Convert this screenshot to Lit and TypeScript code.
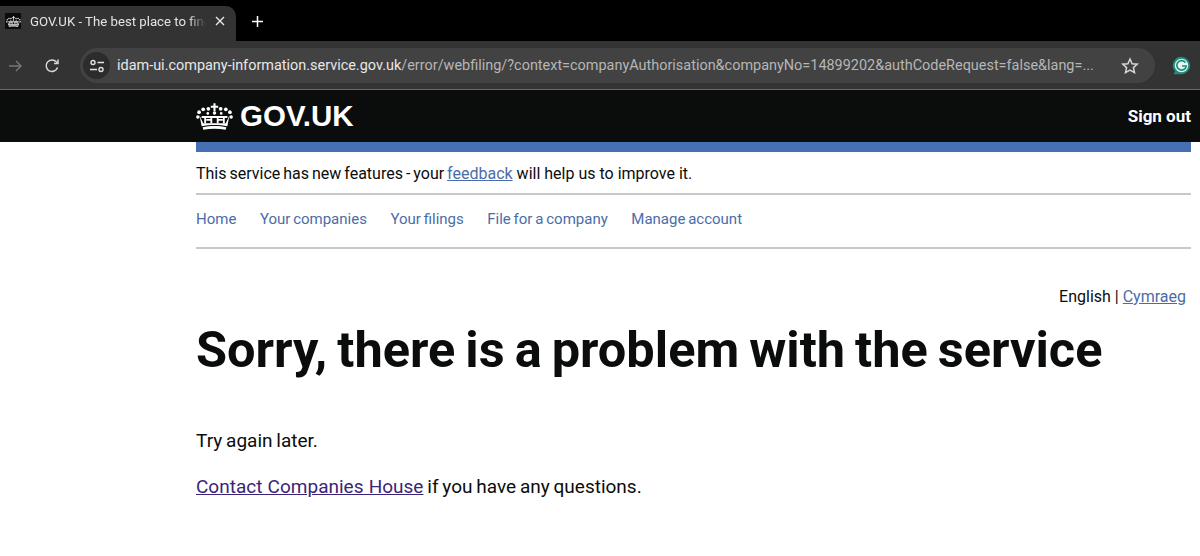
import { LitElement, html, css } from "lit";
import { customElement } from "lit/decorators.js";

const crown = (w: number, h: number) => html`<svg width=${w} height=${h} viewBox="0 0 36 26" fill="currentColor" aria-hidden="true">
  <path d="M17 0h2v2.600h2.600v2H19V8h-2V4.600h-2.600v-2H17z"/>
  <circle cx="18" cy="9.500" r="1.700"/><circle cx="12" cy="5.500" r="1.800"/><circle cx="24" cy="5.500" r="1.800"/>
  <circle cx="7" cy="6" r="1.800"/><circle cx="29" cy="6" r="1.800"/><circle cx="3" cy="8.800" r="1.800"/><circle cx="33" cy="8.800" r="1.800"/>
  <circle cx="1.800" cy="13.500" r="1.700"/><circle cx="34.200" cy="13.500" r="1.700"/><circle cx="11.500" cy="10" r="1.300"/><circle cx="24.500" cy="10" r="1.300"/>
  <path d="M5.500 12.500h25v2h-25zM8 12.500h1.800v7H8zM14 12.500h1.800v7H14zM20.200 12.500H22v7h-1.800zM26.200 12.500H28v7h-1.800zM10 15.500h4v1.600h-4zM22 15.500h4v1.600h-4z"/>
  <path d="M3.500 12l3.500 7.500h22l3.500-7.500-2 10.500c-7.500-1.800-17.500-1.800-25 0zM6.500 23.500c7-1.700 16-1.700 23 0l-.6 2.500c-7-1.500-14.800-1.500-21.800 0z"/>
</svg>`;

@customElement("app-root")
export class AppRoot extends LitElement {
  static styles = css`
    :host { display: block; width: 1200px; height: 556px; overflow: hidden; background: #fff; font-family: Roboto, sans-serif; color: #0b0c0c; }
    .tabstrip { height: 41px; background: #000; display: flex; align-items: flex-start; }
    .tab { width: 236px; height: 35px; margin-top: 6px; background: #333333; border-radius: 0 10px 0 0; display: flex; align-items: center; box-sizing: border-box; padding: 0 0 5px 5px; color: #e3e3e3; font-size: 13.200px; }
    .fav { width: 16px; height: 16px; background: #0b0c0c; color: #e8e8e8; display: flex; align-items: center; justify-content: center; flex: none; }
    .tabtitle { margin-left: 9px; width: 176px; white-space: nowrap; overflow: hidden; -webkit-mask-image: linear-gradient(90deg, #000 90%, transparent); mask-image: linear-gradient(90deg, #000 90%, transparent); }
    .close { margin-left: 9px; width: 10px; height: 10px; display: flex; flex: none; color: #e8e8e8; }
    .plus { margin: 15px 0 0 15px; width: 13px; height: 13px; display: flex; color: #fff; }
    .toolbar { height: 49px; box-sizing: border-box; background: #333333; border-bottom: 1px solid #6a6a6a; display: flex; align-items: center; padding-top: 1px; }
    .arrow { margin-left: 8px; width: 14px; height: 14px; display: flex; color: #777; flex: none; }
    .reload { margin-left: 22px; width: 16px; height: 16px; display: flex; color: #d8d8d8; flex: none; }
    .omni { margin-left: 20px; width: 1075px; height: 35px; border-radius: 18px; background: #424242; display: flex; align-items: center; box-sizing: border-box; flex: none; padding-left: 3px; }
    .site { width: 27px; height: 27px; border-radius: 50%; background: #2c2c2c; display: flex; align-items: center; justify-content: center; flex: none; color: #e3e3e3; }
    .url { margin-left: 7px; width: 990px; flex: none; font-size: 14.450px; color: #b6b6b6; white-space: nowrap; }
    .url b { font-weight: 400; color: #e8e8e8; }
    .star { margin-left: 14px; width: 18px; height: 18px; display: flex; color: #d8d8d8; flex: none; }
    .ext { margin-left: 17px; width: 19px; height: 19px; display: flex; flex: none; }
    .gov { height: 52px; background: #0b0c0c; color: #fff; box-sizing: border-box; padding: 0 9px 0 196px; display: flex; align-items: center; justify-content: space-between; }
    .brand { display: flex; align-items: center; gap: 7px; font-family: "Liberation Sans", sans-serif; font-weight: 700; font-size: 29.500px; }
    .crown { display: flex; color: #fff; }
    .signout { font-weight: 700; font-size: 17px; }
    .content { margin: 0 9px 0 196px; }
    .bluebar { height: 10px; background: #4570b3; }
    .phase { height: 43px; box-sizing: border-box; border-bottom: 2px solid #c8c8c8; padding-top: 1px; font-size: 16px; display: flex; align-items: center; white-space: pre; }
    .before { word-spacing: -1px; }
    a { color: #4a6da8; }
    .nav { height: 54px; box-sizing: border-box; border-bottom: 2px solid #c8c8c8; display: flex; align-items: center; gap: 23.500px; font-size: 15px; word-spacing: -0.9px; color: #4a6da8; padding-bottom: 5px; }
    .lang { margin-top: 38px; text-align: right; padding-right: 5px; font-size: 16px; line-height: 20px; }
    h1 { margin: 11px 0 0; font-size: 50.500px; font-weight: 700; line-height: 64px; word-spacing: -2.500px; white-space: nowrap; }
    p { margin: 0; font-size: 19px; line-height: 26px; word-spacing: -0.9px; }
    .try { margin-top: 46px; }
    .contact { margin-top: 20px; }
    .contact a { color: #3a2477; word-spacing: 0.5px; }
  `;

  render() {
    return html`
      <div class="tabstrip">
        <div class="tab">
          <span class="fav">${crown(15, 11)}</span>
          <span class="tabtitle">GOV.UK - The best place to find</span>
          <svg class="close" viewBox="0 0 10 10" stroke="currentColor" stroke-width="1.400" fill="none"><path d="M1 1l8 8M9 1l-8 8"/></svg>
        </div>
        <svg class="plus" viewBox="0 0 13 13" stroke="currentColor" stroke-width="1.500" fill="none"><path d="M6.500 1v11M1 6.500h11"/></svg>
      </div>
      <div class="toolbar">
        <svg class="arrow" viewBox="0 0 14 14" stroke="currentColor" stroke-width="1.400" fill="none"><path d="M1 7h12M8 2l5 5-5 5"/></svg>
        <svg class="reload" viewBox="0 0 16 16" stroke="currentColor" stroke-width="1.500" fill="none"><path d="M13.500 9.500A5.800 5.800 0 1 1 12.300 3.800L14 5.500"/><path d="M14 1.500v4h-4" /></svg>
        <div class="omni">
          <span class="site"><svg width="16" height="14" viewBox="0 0 16 14" stroke="currentColor" stroke-width="1.400" fill="none"><circle cx="4" cy="3.500" r="2"/><path d="M8.500 3.500H15M1 10.500h7"/><circle cx="12" cy="10.500" r="2"/></svg></span>
          <span class="url"><b>idam-ui.company-information.service.gov.uk</b>/error/webfiling/?context=companyAuthorisation&amp;companyNo=14899202&amp;authCodeRequest=false&amp;lang=...</span>
          <svg class="star" viewBox="0 0 18 18" stroke="currentColor" stroke-width="1.500" fill="none"><path d="M9 2l2.100 4.700 5.100.5-3.800 3.400 1.100 5L9 13l-4.500 2.600 1.100-5L1.800 7.200l5.100-.5z"/></svg>
        </div>
        <svg class="ext" viewBox="0 0 18 18"><path d="M9 .8a8.200 8.200 0 1 1 0 16.400H1.500l1.400-2.700A8.200 8.200 0 0 1 9 .8z" fill="#1d8f78"/><circle cx="9" cy="9" r="6.400" fill="#e8f3f0"/><path d="M12.800 6.300A4.500 4.500 0 1 0 13.500 9.500H9.500" fill="none" stroke="#1d8f78" stroke-width="1.600"/></svg>
      </div>
      <header class="gov">
        <div class="brand"><span class="crown">${crown(37, 27)}</span><span>GOV.UK</span></div>
        <span class="signout">Sign out</span>
      </header>
      <main class="content">
        <div class="bluebar"></div>
        <div class="phase"><span><span class="before">This service has new features - your </span><a href="#">feedback</a> will help us to improve it.</span></div>
        <nav class="nav"><span>Home</span><span>Your companies</span><span>Your filings</span><span>File for a company</span><span>Manage account</span></nav>
        <div class="lang">English | <a href="#">Cymraeg</a></div>
        <h1>Sorry, there is a problem with the service</h1>
        <p class="try">Try again later.</p>
        <p class="contact"><a href="#">Contact Companies House</a> if you have any questions.</p>
      </main>
    `;
  }
}
